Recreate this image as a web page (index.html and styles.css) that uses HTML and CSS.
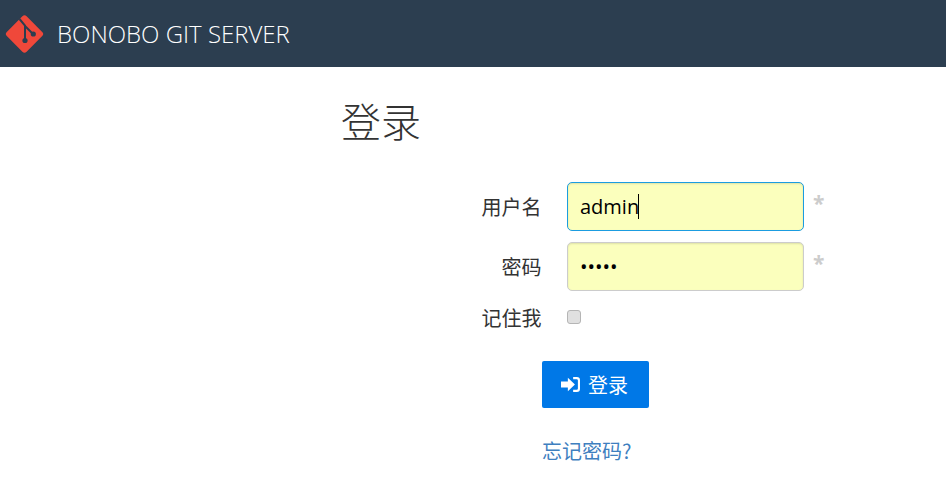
FILE: index.html
```html
<!DOCTYPE html>
<html lang="zh-CN">
<head>
<meta charset="utf-8">
<title>登录</title>
<link rel="stylesheet" href="styles.css">
</head>
<body>
<header class="topbar">
  <svg class="logo" viewBox="0 0 40 40" width="40" height="40" aria-hidden="true">
    <rect class="logo-diamond" x="5.5" y="6" width="28" height="28" rx="3" transform="rotate(45 19.5 20)"/>
    <path class="logo-line" d="M14.5 5 L20 11.5 L20 26 M20 12 L28 20"/>
    <circle class="logo-dot" cx="28.3" cy="20" r="2.6"/>
    <circle class="logo-dot" cx="20" cy="26.5" r="2.6"/>
  </svg>
  <span class="brand">BONOBO GIT SERVER</span>
</header>
<main class="page">
  <h1 class="title">登录</h1>
  <form class="login-form">
    <div class="row">
      <label class="label">用户名</label>
      <div class="field">
        <input class="input input-focus" type="text" value="admin">
        <span class="caret"></span>
      </div>
      <span class="req">*</span>
    </div>
    <div class="row">
      <label class="label">密码</label>
      <div class="field">
        <input class="input" type="password" value="admin">
      </div>
      <span class="req">*</span>
    </div>
    <div class="row row-check">
      <label class="label">记住我</label>
      <span class="checkbox"></span>
    </div>
    <div class="actions">
      <button class="btn" type="button">
        <svg class="btn-icon" viewBox="0 0 18 16" width="19" height="17" aria-hidden="true">
          <path d="M0 5.2 H6.5 V1.5 L13.2 8 L6.5 14.5 V10.8 H0 Z"/>
          <path d="M11.5 1 H15 Q18 1 18 4 V12 Q18 15 15 15 H11.5 V13 H14.8 Q16 13 16 11.8 V4.2 Q16 3 14.8 3 H11.5 Z"/>
        </svg>
        <span>登录</span>
      </button>
      <a class="forgot" href="#">忘记密码?</a>
    </div>
  </form>
</main>
</body>
</html>
```
FILE: styles.css
```css
* { box-sizing: border-box; }
html, body { margin: 0; padding: 0; }
body {
  background: #fff;
  color: #333;
  font-family: "Open Sans", "Noto Sans CJK SC", sans-serif;
  font-size: 18px;
  overflow: hidden;
}
.topbar {
  height: 67px;
  background: #2c3e50;
  display: flex;
  align-items: center;
  padding-left: 5px;
}
.logo { flex: none; }
.logo-diamond { fill: #f0483a; }
.logo-line { fill: none; stroke: #2c3e50; stroke-width: 2; }
.logo-dot { fill: #2c3e50; }
.brand {
  margin-left: 12px;
  color: #fff;
  font-family: "Open Sans", sans-serif;
  font-weight: 300;
  font-size: 24px;
  white-space: nowrap;
}
.page { padding-left: 341px; }
.title {
  margin: 24px 0 0;
  height: 65px;
  font-family: "Noto Sans CJK SC", sans-serif;
  font-weight: 300;
  font-size: 40px;
  line-height: 58px;
  color: #333;
}
.login-form { margin: 26px 0 0 1px; }
.row {
  display: flex;
  align-items: center;
  height: 49px;
  margin-bottom: 11px;
}
.label {
  width: 200px;
  padding-right: 0.5px;
  text-align: right;
  font-family: "Noto Sans CJK SC", sans-serif;
  font-size: 20px;
  font-weight: 400;
  color: #333;
  flex: none;
}
.field {
  position: relative;
  width: 237px;
  margin-left: 25px;
  flex: none;
}
.input {
  display: block;
  width: 100%;
  height: 49px;
  padding: 0 12px;
  background: #fbffbd;
  border: 1px solid #ccc;
  border-radius: 5px;
  box-shadow: inset 0 1px 2px rgba(0,0,0,.12);
  color: #000;
  font-family: "Open Sans", sans-serif;
  font-size: 20px;
  outline: none;
}
.input-focus { border-color: #1b9ce0; }
.caret {
  position: absolute;
  left: 71px;
  top: 12px;
  width: 1px;
  height: 25px;
  background: #000;
}
.req {
  margin-left: 9px;
  margin-top: -6px;
  font-family: "Open Sans", sans-serif;
  font-size: 21px;
  font-weight: 700;
  line-height: 1;
  color: #ccc;
}
.row-check {
  height: 30px;
  margin-bottom: 0;
}
.checkbox {
  display: block;
  width: 14px;
  height: 14px;
  margin-left: 25px;
  background: #e0e0e0;
  border: 1px solid #b5b5b5;
  border-radius: 3px;
}
.actions {
  margin-left: 200px;
  padding-top: 29px;
  display: flex;
  flex-direction: column;
  align-items: flex-start;
}
.btn {
  display: flex;
  align-items: center;
  justify-content: center;
  gap: 8px;
  width: 107px;
  height: 47px;
  padding: 0 2px 0 0;
  background: #0078e7;
  border: 0;
  border-radius: 2px;
  color: #fff;
  font-family: "Noto Sans CJK SC", sans-serif;
  font-size: 20px;
  font-weight: 400;
}
.btn-icon { fill: #fff; flex: none; }
.forgot {
  margin-top: 28px;
  font-family: "Noto Sans CJK SC", sans-serif;
  font-size: 20px;
  font-weight: 400;
  line-height: 30px;
  color: #3f7fbf;
  text-decoration: none;
}
```
